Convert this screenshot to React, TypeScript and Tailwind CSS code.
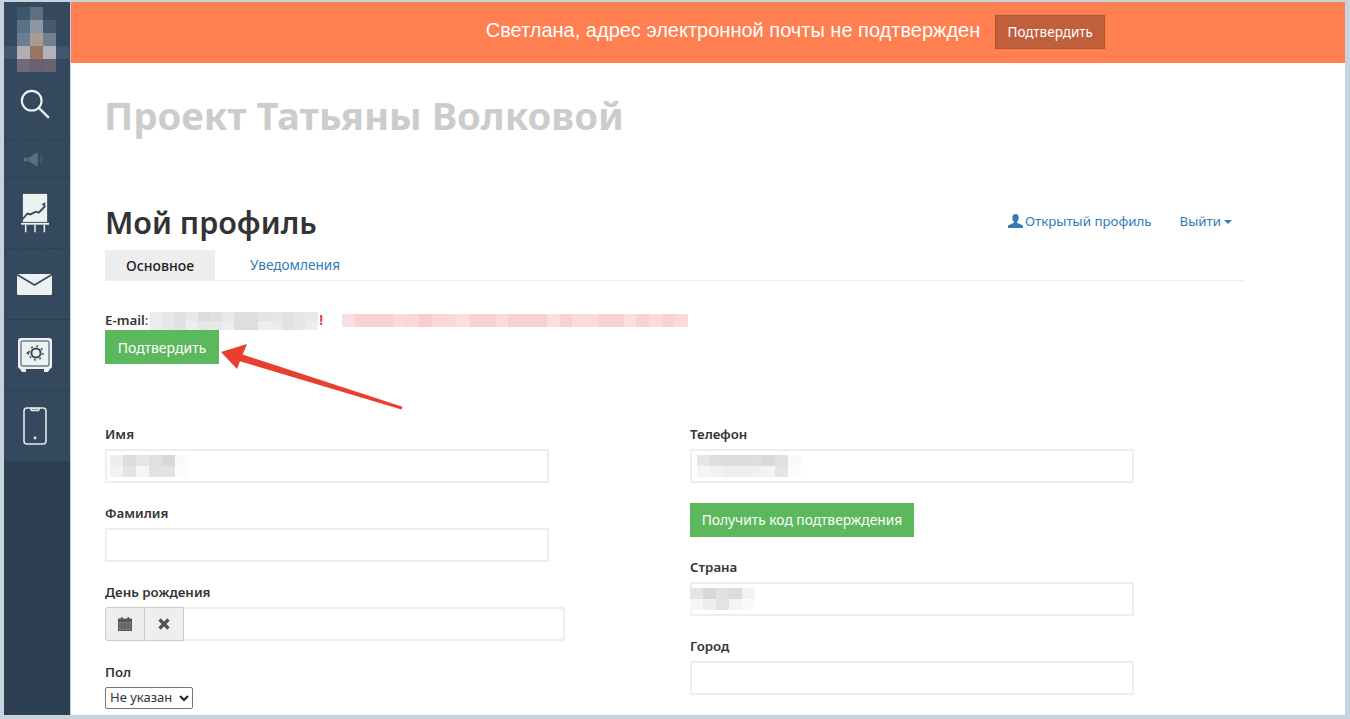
const FONT = "font-['Noto_Sans',sans-serif]";

// redacted values in the screenshot are blurred into mosaics, so they are colour cells
function Mosaic({ cols, cell, colors, className = "" }: { cols: number; cell: [number, number]; colors: string[]; className?: string }) {
  return (
    <div className={"flex flex-wrap " + className} style={{ width: cols * cell[0] }}>
      {colors.map((c, i) => (
        <div key={i} style={{ width: cell[0], height: cell[1], background: c }} />
      ))}
    </div>
  );
}

function NavItem({ children, className = "" }: { children: React.ReactNode; className?: string }) {
  return <div className={"flex items-center justify-center border-b border-[#2c3e50] pr-[5px] " + className}>{children}</div>;
}

function Field({ label, children, className = "" }: { label: string; children: React.ReactNode; className?: string }) {
  return (
    <div className={className}>
      <div className="mb-[5px] h-[18px] text-[13.3px] leading-[16px] font-semibold text-[#333]">{label}</div>
      {children}
    </div>
  );
}

function TextBox({ children }: { children?: React.ReactNode }) {
  return <div className="flex h-[34px] w-[444px] items-center border-2 border-[#eeeeee] bg-white">{children}</div>;
}

export default function App() {
  return (
    <div className={"flex h-[719px] overflow-hidden bg-[#c8d3e0] pt-[2px] pr-[5px] pb-[4px] pl-[4px] " + FONT}>
      <aside className="flex w-[66px] shrink-0 flex-col bg-[#34495e]">
        <div className="h-[69px] pt-[5px]">
          <Mosaic
            cols={5}
            cell={[13, 13]}
            colors={[
              "#34495e", "#3f566f", "#5d6f80", "#34495e", "#34495e",
              "#34495e", "#5a7087", "#8f98a1", "#46596f", "#34495e",
              "#34495e", "#6b7d90", "#a89c92", "#6f8090", "#34495e",
              "#42576c", "#b0aeb2", "#9c7560", "#b3b3b7", "#3f566f",
              "#34495e", "#72697a", "#6b6070", "#6b6272", "#34495e",
            ]}
          />
        </div>
        <NavItem className="h-[70px] border-dashed pb-[3px]">
          <svg width="30" height="30" viewBox="0 0 32 32" fill="none" stroke="#f0f3f4" strokeWidth="2.200" strokeLinecap="round">
            <circle cx="12.500" cy="12.500" r="10.500" />
            <path d="M20 20l10 10" strokeWidth="2.600" />
          </svg>
        </NavItem>
        <NavItem className="h-[37px]">
          <svg width="22" height="15" viewBox="0 0 24 16" fill="#5a7088">
            <rect x="0" y="6" width="4" height="4" />
            <path d="M5 6l10-6v16L5 10z" />
            <path d="M18 4q3 4 0 8" fill="none" stroke="#5a7088" />
          </svg>
        </NavItem>
        <NavItem className="h-[71px] border-dashed">
          <svg width="28" height="41" viewBox="0 0 30 42">
            <rect x="2" y="0" width="26" height="30" fill="#eef1f2" />
            <path d="M0 29l7-8 3 1 6-3 3 1 7-7" fill="none" stroke="#34495e" strokeWidth="2" />
            <path d="M26 9v5l-4-3z" fill="#34495e" />
            <rect x="0" y="31" width="30" height="2" fill="#eef1f2" />
            <path d="M5 33v8M15 33v8M25 33v8" stroke="#eef1f2" strokeWidth="1.600" />
          </svg>
        </NavItem>
        <NavItem className="h-[71px]">
          <svg width="35" height="21" viewBox="0 0 35 21">
            <rect width="35" height="21" rx="1.500" fill="#eef1f2" />
            <path d="M0 0.500l17.500 10.500L35 0.500" fill="none" stroke="#34495e" strokeWidth="1.600" />
          </svg>
        </NavItem>
        <NavItem className="h-[71px]">
          <svg width="34" height="34" viewBox="0 0 34 34">
            <rect x="0" y="0" width="34" height="31" rx="3" fill="#eef1f2" />
            <rect x="3" y="3" width="28" height="25" rx="2" fill="none" stroke="#6b7d8f" strokeWidth="1.400" />
            <path d="M2 31h6v3H4zM26 31h6l-2 3h-4z" fill="#eef1f2" />
            <circle cx="18" cy="15" r="4.600" fill="none" stroke="#34495e" strokeWidth="2" />
            <circle cx="18" cy="15" r="7" fill="none" stroke="#34495e" strokeWidth="1.400" strokeDasharray="2 3.500" />
            <path d="M8 15l3-2v4z" fill="#34495e" />
          </svg>
        </NavItem>
        <NavItem className="h-[70px] border-b-0">
          <svg width="24" height="38" viewBox="0 0 24 38" fill="none" stroke="#e3e7ea" strokeWidth="1.600">
            <rect x="1" y="1" width="22" height="36" rx="3" />
            <path d="M8 1.500h8v1q0 1-1 1H9q-1 0-1-1z" />
            <circle cx="12" cy="31" r="1.400" fill="#e3e7ea" stroke="none" />
          </svg>
        </NavItem>
        <div className="flex-1 bg-[#2d3f52]" />
      </aside>

      <main className="relative ml-[1px] flex-1 overflow-hidden bg-white">
        <div className="flex h-[61px] items-center justify-center gap-[15px] bg-[#ff7f50] pb-[1px] pl-[175px]">
          <span className="mb-[4px] font-['Liberation_Sans',sans-serif] text-[20px] text-white">Светлана, адрес электронной почты не подтвержден</span>
          <button className="flex h-[34px] w-[110px] items-center justify-center border border-[#ad5636] bg-[#bf5f3c] text-[13.5px] text-white">Подтвердить</button>
        </div>

        <div className="pl-[34px]">
          <h2 className="mt-[29px] -ml-[1px] text-[38.3px] leading-[46px] font-bold text-[#cccccc]">Проект Татьяны Волковой</h2>

          <div className="mt-[64px] flex h-[40px] w-[1140px] items-center justify-between">
            <h1 className="text-[30.5px] leading-[40px] font-semibold text-[#333]">Мой профиль</h1>
            <div className="mr-[13px] -mt-[1px] flex items-center gap-[28px] text-[13.3px] text-[#337ab7]">
              <span className="flex items-center gap-[2px]">
                <svg width="15" height="15" viewBox="0 0 15 15" fill="#337ab7">
                  <path d="M7.500 0c2 0 3.200 1.500 3.200 3.700 0 1.600-.8 3.100-1.600 3.900v1.200L15 11.500V14H0v-2.500l5.900-2.700V7.600C5.100 6.800 4.300 5.300 4.300 3.700 4.300 1.500 5.500 0 7.500 0z" />
                </svg>
                Открытый профиль
              </span>
              <span className="flex items-center gap-[3px]">
                Выйти
                <span className="mt-[1px] border-x-[4px] border-t-[4px] border-x-transparent border-t-[#337ab7]" />
              </span>
            </div>
          </div>

          <div className="mt-[8px] flex h-[31px] w-[1140px] border-b border-[#eeeeee] text-[13.6px]">
            <div className="flex h-[30px] w-[110px] items-center justify-center bg-[#eeeeee] text-[14px] font-medium text-[#222]">Основное</div>
            <div className="flex h-[30px] items-center pl-[35px] text-[#337ab7]">Уведомления</div>
          </div>

          <div className="mt-[30px] flex h-[19px] items-center text-[13.3px] text-[#333]">
            <span className="font-semibold">E-mail</span>:
            <Mosaic
              cols={14}
              cell={[12, 9]}
              className="ml-[2px]"
              colors={[
                "#ececec", "#e8e8e8", "#e2e2e2", "#e8e8e8", "#dcdcdc", "#e0e0e0", "#e8e8e8", "#dedede", "#dedede", "#e4e4e4", "#e6e6e6", "#e2e2e2", "#e6e6e6", "#e8e8e8",
                "#ececec", "#e8e8e8", "#e2e2e2", "#eeeeee", "#e6e6e6", "#e8e8e8", "#eeeeee", "#dedede", "#dedede", "#eeeeee", "#ececec", "#e2e2e2", "#e6e6e6", "#eeeeee",
              ]}
            />
            <span className="ml-[1px] font-bold text-[#e8402f]">!</span>
            <Mosaic
              cols={27}
              cell={[12.8, 13]}
              className="ml-[19px]"
              colors={["#fbdfe0", "#f9d3d4", "#f9d3d4", "#f8cfd2", "#fadadb", "#f9d6d8", "#f8ccce", "#fbd6d8", "#fbd9da", "#fce0e1", "#f9cfd1", "#f9d0d2", "#fbdbdc", "#f9d0d2", "#f9cfd1", "#f9d0d2", "#fcdfe0", "#f9cfd1", "#fbdbdc", "#fbdbdc", "#f9d3d4", "#f9d3d4", "#fbdfe0", "#f9d3d4", "#fbdbdc", "#f9d3d4", "#fadadb"]}
            />
          </div>
          <button className="flex h-[34px] w-[114px] items-center justify-center border border-[#5cb85c] bg-[#5cb85c] text-[14px] text-white">Подтвердить</button>

          <div className="mt-[62px] flex gap-[141px]">
            <div className="flex flex-col gap-[22px]">
              <Field label="Имя">
                <TextBox>
                  <Mosaic cols={6} cell={[13, 11]} className="ml-[3px]" colors={["#eeeeee", "#dddddd", "#e6e6e6", "#e0e0e0", "#d8d8d8", "#fafafa", "#f2f2f2", "#e4e4e4", "#f5f5f5", "#e2e2e2", "#e2e2e2", "#fcfcfc"]} />
                </TextBox>
              </Field>
              <Field label="Фамилия">
                <TextBox />
              </Field>
              <Field label="День рождения">
                <div className="flex h-[34px] w-[460px]">
                  <div className="flex w-[40px] items-center justify-center rounded-l-[3px] border border-[#cccccc] bg-[#eeeeee]">
                    <svg width="14" height="14" viewBox="0 0 14 14" fill="#555">
                      <path d="M3 0h1.500v1.500h5V0H11v1.500h3V14H0V1.500h3z" />
                      <path d="M1 5h12v8H1z" fill="#8a8a8a" />
                      <path d="M1 7h12M1 9h12M1 11h12M4 5v8M7 5v8M10 5v8" stroke="#555" strokeWidth="0.900" />
                    </svg>
                  </div>
                  <div className="flex w-[39px] items-center justify-center border border-l-0 border-[#cccccc] bg-[#eeeeee]">
                    <svg width="12" height="12" viewBox="0 0 12 12" stroke="#555" strokeWidth="3.200">
                      <path d="M1.500 1.500l9 9M10.500 1.500l-9 9" />
                    </svg>
                  </div>
                  <div className="flex-1 rounded-r-[3px] border-2 border-l-0 border-[#eeeeee]" />
                </div>
              </Field>
              <Field label="Пол" className="mt-[1px]">
                <div className="flex h-[22px] w-[88px] items-center justify-between rounded-[2px] border border-[#767676] pr-[3px] pl-[4px] text-[13px] text-[#333]">
                  Не указан
                  <svg width="10" height="7" viewBox="0 0 10 7" fill="none" stroke="#222" strokeWidth="2">
                    <path d="M1 1l4 4 4-4" />
                  </svg>
                </div>
              </Field>
            </div>

            <div className="-ml-[16px] flex flex-col">
              <Field label="Телефон">
                <TextBox>
                  <Mosaic cols={8} cell={[13, 11]} className="ml-[5px]" colors={["#e6e6e6", "#dedede", "#dddddd", "#dddddd", "#dedede", "#dadada", "#e0e0e0", "#fafafa", "#f5f5f5", "#f2f2f2", "#eeeeee", "#eeeeee", "#f0f0f0", "#f4f4f4", "#e4e4e4", "#fcfcfc"]} />
                </TextBox>
              </Field>
              <button className="mt-[20px] flex h-[34px] w-[224px] items-center justify-center border border-[#5cb85c] bg-[#5cb85c] text-[13.8px] text-white">Получить код подтверждения</button>
              <Field label="Страна" className="mt-[22px]">
                <TextBox>
                  <Mosaic cols={5} cell={[13, 11]} className="-ml-[2px]" colors={["#e4e4e4", "#d8d8d8", "#e2e2e2", "#dcdcdc", "#f2f2f2", "#f6f6f6", "#eeeeee", "#e4e4e4", "#f4f4f4", "#fafafa"]} />
                </TextBox>
              </Field>
              <Field label="Город" className="mt-[22px]">
                <TextBox />
              </Field>
            </div>
          </div>
        </div>

        {/* annotation arrow drawn on top of the screenshot */}
        <svg className="pointer-events-none absolute top-0 left-0" width="500" height="450" fill="#e8402f">
          <path d="M331.500 404.800L330.500 407.500 168 359l2-7z" />
          <path d="M150 350l26-8-5 12-5 13z" />
        </svg>
      </main>
    </div>
  );
}
